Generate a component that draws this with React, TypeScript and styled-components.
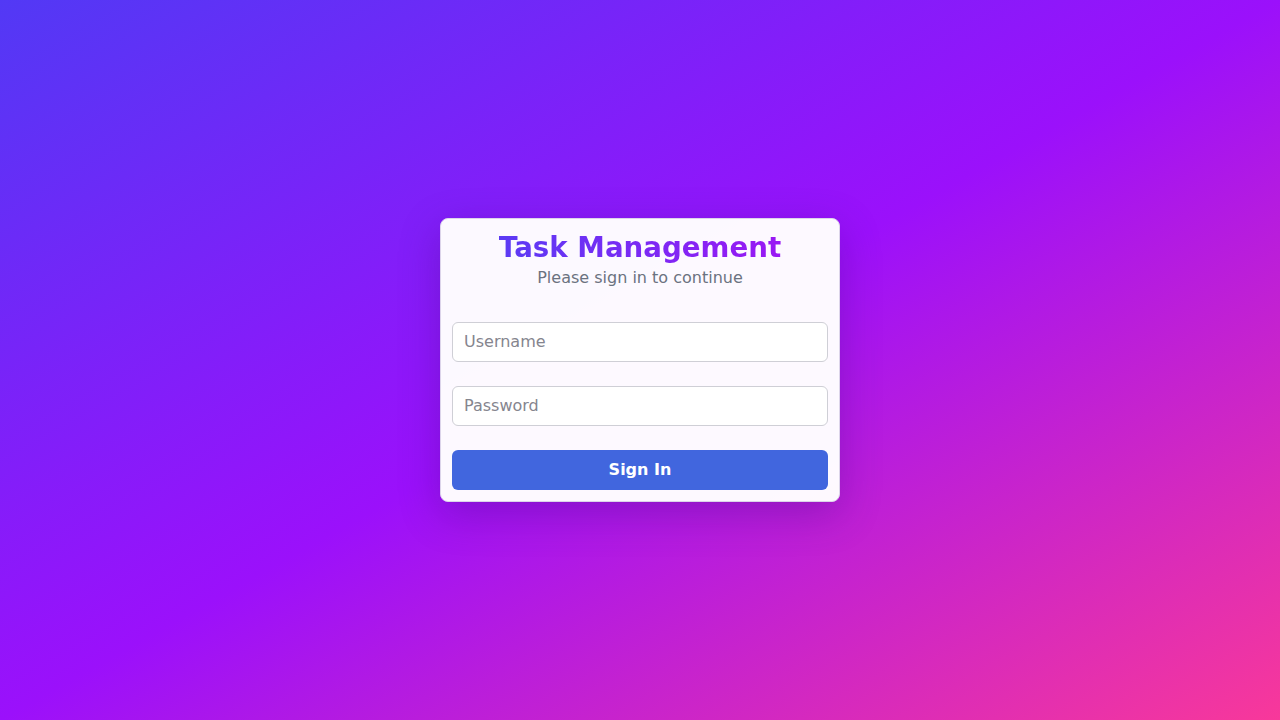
import React from "react";
import styled, { createGlobalStyle } from "styled-components";

const Global = createGlobalStyle`
  html, body { margin: 0; padding: 0; height: 100%; }
  body { font-family: "DejaVu Sans", "Noto Sans", sans-serif; }
  #root { height: 100%; }
  * { box-sizing: border-box; }
`;

const Page = styled.div`
  min-height: 100vh;
  display: flex;
  align-items: center;
  justify-content: center;
  background: linear-gradient(to bottom right, #5239f5 0%, #9b10fb 50%, #f8389a 100%);
`;

const Card = styled.div`
  width: 400px;
  padding: 11px;
  background: rgba(255, 255, 255, 0.975);
  border: 1px solid #dcd4ea;
  border-radius: 8px;
  box-shadow: 0 12px 40px rgba(60, 10, 120, 0.3);
  display: flex;
  flex-direction: column;
`;

const Header = styled.div`
  text-align: center;
`;

const Title = styled.h1`
  margin: 1px 0 0;
  font-size: 27.7px;
  font-weight: 700;
  background: linear-gradient(90deg, #5b3bf4, #9a18f4);
  -webkit-background-clip: text;
  background-clip: text;
  color: transparent;
  display: inline-block;
`;

const Subtitle = styled.p`
  margin: 4px 0 0;
  font-size: 16px;
  color: #6b7280;
`;

const Form = styled.form`
  margin-top: 35px;
  display: flex;
  flex-direction: column;
  gap: 24px;
`;

const Input = styled.input`
  height: 40px;
  width: 100%;
  padding: 0 11px 2px;
  font-family: inherit;
  font-size: 16px;
  color: #111;
  background: #fff;
  border: 1px solid #cfcfd6;
  border-radius: 6px;
  outline: none;
  &::placeholder { color: #85858e; }
`;

const Button = styled.button`
  height: 40px;
  width: 100%;
  padding: 0 0 2px;
  border: none;
  border-radius: 6px;
  background: #4166de;
  color: #fff;
  font-family: inherit;
  font-size: 16px;
  font-weight: 700;
  cursor: pointer;
`;

export default function App() {
  return (
    <>
      <Global />
      <Page>
        <Card>
          <Header>
            <Title>Task Management</Title>
            <Subtitle>Please sign in to continue</Subtitle>
          </Header>
          <Form onSubmit={(e) => e.preventDefault()}>
            <Input type="text" placeholder="Username" />
            <Input type="password" placeholder="Password" />
            <Button type="submit">Sign In</Button>
          </Form>
        </Card>
      </Page>
    </>
  );
}
